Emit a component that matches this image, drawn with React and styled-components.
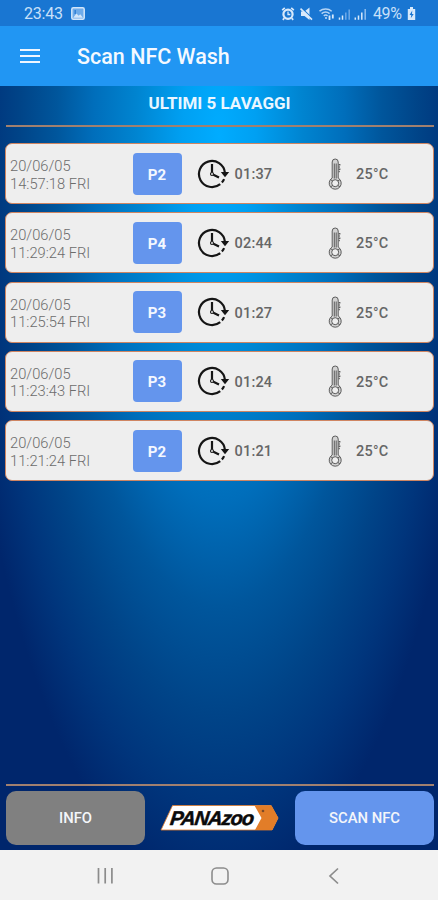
import styled, { createGlobalStyle } from 'styled-components';

const washes = [
  { id: 1, date: '20/06/05', hour: '14:57:18 FRI', program: 'P2', duration: '01:37', temp: '25°C' },
  { id: 2, date: '20/06/05', hour: '11:29:24 FRI', program: 'P4', duration: '02:44', temp: '25°C' },
  { id: 3, date: '20/06/05', hour: '11:25:54 FRI', program: 'P3', duration: '01:27', temp: '25°C' },
  { id: 4, date: '20/06/05', hour: '11:23:43 FRI', program: 'P3', duration: '01:24', temp: '25°C' },
  { id: 5, date: '20/06/05', hour: '11:21:24 FRI', program: 'P2', duration: '01:21', temp: '25°C' },
];

const PictureIcon = () => (
  <svg width="14" height="13" viewBox="0 0 14 13">
    <rect x="0.8" y="0.8" width="12.4" height="11.4" rx="1.5" fill="#6eabea" stroke="#d3e6fa" strokeWidth="1.5" />
    <path d="M2.2 10.8 5.4 6.4l2.3 2.3 1.5-1.4 2.8 3.5z" fill="#d3e6fa" />
    <path d="M4.2 3v4" stroke="#2a7bd3" strokeWidth="1.3" />
  </svg>
);

const StatusIcons = () => (
  <svg width="88" height="16" viewBox="0 0 88 16" fill="none">
    {/* alarm */}
    <circle cx="7" cy="8.2" r="4.6" fill="#1976d2" stroke="#d8e9fb" strokeWidth="2.2" />
    <path d="M1.2 4.2 3.8 1.8M12.8 4.2 10.2 1.8M3.3 12.2l-1.5 1.6M10.7 12.2l1.5 1.6" stroke="#d8e9fb" strokeWidth="1.7" />
    <path d="M7 5.4v3.1h2.3" stroke="#d8e9fb" strokeWidth="1.3" />
    {/* muted speaker */}
    <path d="M20 5.5h3.5l5-4v12.5l-5-3.9H20z" fill="#d8e9fb" />
    <path d="m20.3 1.8 11 10.6" stroke="#1976d2" strokeWidth="1.3" />
    <path d="m19.5 2.6 11.5 11" stroke="#d8e9fb" strokeWidth="1.6" />
    {/* wifi */}
    <path d="M38.5 5.2c3.6-3 8.8-3 12.2 0M40.6 7.6c2.4-2 5.6-2 8 0M42.8 9.8c1.2-1 2.6-1 3.8 0" stroke="#b5d4f5" strokeWidth="1.5" />
    <path d="M45 12.8v-1.6M48.5 9.5v4.5M51.8 8.5v4" stroke="#d8e9fb" strokeWidth="1.8" />
    {/* signal strength, two sims */}
    <path d="M58.5 11.5v2.2M61.5 9.5v4.2" stroke="#d8e9fb" strokeWidth="1.5" />
    <path d="M64.8 6.5v7.2M68.2 3.5v10.2" stroke="#6faae8" strokeWidth="1.5" />
    <path d="M74.3 11.5v2.2M77.5 9.5v4.2M80.8 6.5v7.2" stroke="#d8e9fb" strokeWidth="1.5" />
    <path d="M84.2 3v10.7" stroke="#8fbeef" strokeWidth="1.5" />
  </svg>
);

const BatteryIcon = () => (
  <svg width="9" height="13" viewBox="0 0 9 13">
    <path d="M3 0h3v2h2.2v11H.8V2H3z" fill="#d8e9fb" />
    <path d="M5.3 3.5 2.5 8h1.8l-.5 3.2L6.7 7H5z" fill="#1976d2" />
  </svg>
);

const MenuIcon = () => (
  <svg width="20" height="16" viewBox="0 0 20 16" stroke="#eef6ff" strokeWidth="2">
    <path d="M0 2h20M0 8h20M0 14h20" />
  </svg>
);

const ClockIcon = () => (
  <svg width="33" height="32" viewBox="0 0 33 32" fill="none" stroke="#151515">
    <path d="M27.9 14.6A13 13 0 1 0 23.2 26.1" strokeWidth="2.2" />
    <path d="M24.9 24.4a13 13 0 0 0 2.2-3.3" strokeWidth="2.2" />
    <path d="M23.8 14h8.4l-4.2 5.2z" fill="#151515" stroke="none" />
    <path d="M15 6v8.2M16.4 16.8l5.6 2.8" strokeWidth="2.2" />
    <circle cx="15" cy="16" r="1.5" strokeWidth="1.1" />
  </svg>
);

const ThermometerIcon = () => (
  <svg width="15" height="32" viewBox="0 0 15 32" fill="none" stroke="#5c5c5c" strokeWidth="1">
    <path d="M4.2 20V4a3 3 0 0 1 6 0v16a6 6 0 1 1-6 0z" fill="#d2d2d2" />
    <path d="M6.3 20.5V5.5M8.2 20.5V5.5" />
    <circle cx="7.2" cy="25.2" r="3.5" fill="#eee" />
    <path d="m2.5 21.5 2.2 1.6M12 21.5l-2.2 1.6M2.5 29l2.2-1.6M12 29l-2.2-1.6" />
    <path d="M10.6 6.8h1.8M10.6 9h1.2M10.6 11.2h1.8M10.6 13.5h1.2" strokeWidth="1.4" />
  </svg>
);

const Logo = () => (
  <svg width="119" height="28" viewBox="0 0 119 28">
    <path d="M12.5 1.5H111l7 12.5-6 12H1z" fill="#fff" stroke="#e07a28" strokeWidth="0.8" />
    <path d="M94.5 1.5H111.5L118.3 14 112.3 26H95l6.5-12z" fill="#e27d28" />
    <circle cx="103" cy="7" r="1.3" fill="#7c4a26" />
    <text
      x="0"
      y="0"
      transform="translate(9.5 21.3) skewX(-7)"
      fontFamily="'Liberation Sans', Arial, sans-serif"
      fontStyle="italic"
      fontWeight="700"
      fontSize="20"
      textLength="84"
      fill="#0a0a0a"
      stroke="#0a0a0a"
      strokeWidth="0.5"
    >
      PANAzoo
    </text>
  </svg>
);

const App = () => {
  return (
    <>
      <GlobalStyle />
      <St.Screen>
        <St.StatusBar>
          <St.StatusTime>23:43</St.StatusTime>
          <PictureIcon />
          <St.StatusRight>
            <StatusIcons />
            <St.Battery>49%</St.Battery>
            <BatteryIcon />
          </St.StatusRight>
        </St.StatusBar>
        <St.AppBar>
          <MenuIcon />
          <St.AppTitle>Scan NFC Wash</St.AppTitle>
        </St.AppBar>
        <St.Content>
          <St.ListTitle>ULTIMI 5 LAVAGGI</St.ListTitle>
          <St.Divider />
          <St.WashList>
            {washes.map(wash => (
              <St.WashCard key={wash.id}>
                <St.WashDate>
                  <span>{wash.date}</span>
                  <span>{wash.hour}</span>
                </St.WashDate>
                <St.Program>{wash.program}</St.Program>
                <St.Measure $gap="5px">
                  <ClockIcon />
                  <span>{wash.duration}</span>
                </St.Measure>
                <St.Measure $gap="13.5px">
                  <ThermometerIcon />
                  <span>{wash.temp}</span>
                </St.Measure>
              </St.WashCard>
            ))}
          </St.WashList>
          <St.Divider />
          <St.Footer>
            <St.Button $color="#808080">INFO</St.Button>
            <Logo />
            <St.Button $color="#6495ed">SCAN NFC</St.Button>
          </St.Footer>
        </St.Content>
        <St.NavBar>
          <svg width="18" height="18" viewBox="0 0 18 18" stroke="#8c8c8c" strokeWidth="1.7">
            <path d="M2.5 1v15.5M9.2 1v15.5M15.9 1v15.5" />
          </svg>
          <svg width="18" height="18" viewBox="0 0 18 18" fill="none" stroke="#8c8c8c" strokeWidth="1.6">
            <rect x="1" y="1" width="16" height="16" rx="4.5" />
          </svg>
          <svg width="18" height="18" viewBox="0 0 18 18" fill="none" stroke="#8c8c8c" strokeWidth="1.7">
            <path d="M13 1.5 5 9l8 7.5" />
          </svg>
        </St.NavBar>
      </St.Screen>
    </>
  );
};

const GlobalStyle = createGlobalStyle`
  * {
    box-sizing: border-box;
  }

  body {
    margin: 0;
    font-family: Roboto, 'Liberation Sans', sans-serif;
  }

  svg {
    display: block;
    flex-shrink: 0;
  }
`;

const St = {
  Screen: styled.div`
    display: flex;
    flex-direction: column;

    width: 438px;
    height: 900px;
    overflow: hidden;
  `,
  StatusBar: styled.header`
    display: flex;
    align-items: center;
    gap: 8px;

    height: 26px;
    padding: 1px 22px 0 24px;

    background: #1976d2;
    color: #c8e0f9;
    font-size: 16px;
  `,
  StatusTime: styled.span`
    width: 39px;
    letter-spacing: -0.2px;
  `,
  StatusRight: styled.div`
    display: flex;
    align-items: center;

    margin-left: auto;
  `,
  Battery: styled.span`
    width: 29px;
    margin: 0 5px 0 4px;
    letter-spacing: -0.4px;
  `,
  AppBar: styled.div`
    display: flex;
    align-items: center;
    gap: 37px;

    height: 60px;
    padding: 0 20px;

    background: #2196f3;
  `,
  AppTitle: styled.h1`
    margin: 2px 0 0;

    color: #f4f9ff;
    font-size: 21.5px;
    font-weight: 500;
    line-height: 26px;
  `,
  Content: styled.main`
    display: flex;
    flex-direction: column;
    flex: 1;

    padding: 0 4px 0 5px;

    background: radial-gradient(
      ellipse 262px 760px at 50% 50px,
      #00acff 0%,
      #00a0f2 14%,
      #0084d0 32%,
      #006ebb 48%,
      #00569c 62%,
      #004488 76%,
      #00357c 88%,
      #00266c 100%
    );
  `,
  ListTitle: styled.h2`
    margin: 0;
    height: 39px;

    color: #eaf6ff;
    font-size: 17px;
    font-weight: 700;
    line-height: 35px;
    text-align: center;
  `,
  Divider: styled.div`
    height: 2px;
    margin: 0 0 0 1px;

    background: #a1806f;
  `,
  WashList: styled.ul`
    display: flex;
    flex-direction: column;
    flex: 1;
    gap: 8.3px;

    margin: 0;
    padding: 16px 0 0;

    list-style: none;
  `,
  WashCard: styled.li`
    display: grid;
    grid-template-columns: 122.5px 64px 131px 1fr;
    align-items: center;

    height: 61px;
    padding-left: 4px;
    border: 1.5px solid #cf8562;
    border-radius: 7px;

    background: #eee;
  `,
  WashDate: styled.div`
    display: flex;
    flex-direction: column;

    padding-top: 4px;

    color: #6c6c6c;
    font-size: 14.7px;
    font-weight: 300;
    line-height: 17.5px;
    white-space: nowrap;
  `,
  Program: styled.div`
    display: flex;
    align-items: center;
    justify-content: center;

    width: 49px;
    height: 42px;
    padding-top: 2px;
    border-radius: 4px;

    background: #6495ed;
    color: #f4f8ff;
    font-size: 15px;
    font-weight: 700;
  `,
  Measure: styled.div`
    display: flex;
    align-items: center;
    gap: ${props => props.$gap};

    color: #666;
    font-size: 14.5px;
    font-weight: 500;

    & > span {
      padding-top: 2px;
      letter-spacing: 0.2px;
    }
  `,
  Footer: styled.footer`
    display: flex;
    align-items: flex-start;
    justify-content: space-between;

    height: 64px;
    padding: 5px 0 0 1px;

    & > svg {
      margin: 13px 2px 0 0;
    }
  `,
  Button: styled.button`
    width: 139px;
    height: 54px;
    border: none;
    border-radius: 10px;

    background: ${props => props.$color};
    color: #f4f6fa;
    font-family: inherit;
    font-size: 14.8px;
    font-weight: 500;
  `,
  NavBar: styled.nav`
    display: flex;
    align-items: center;
    justify-content: space-between;

    height: 50px;
    padding: 2px 95px 0 96px;

    background: #f2f2f2;
  `,
};

export default App;
